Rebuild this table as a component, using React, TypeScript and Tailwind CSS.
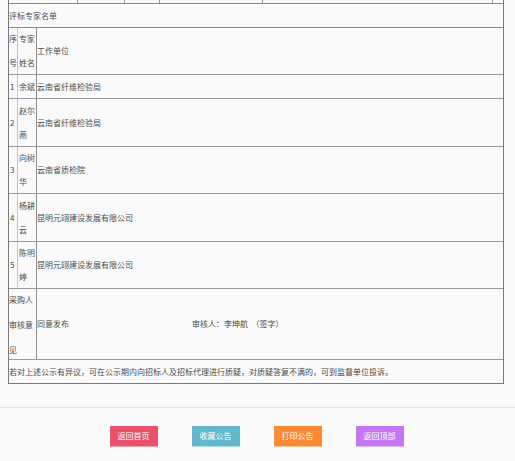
import React from "react";

const font = { fontFamily: '"Noto Sans CJK SC", "Noto Sans", sans-serif' };

function Row({ h, seq, name, unit }: { h: string; seq: string; name: React.ReactNode; unit: string }) {
  return (
    <div className={`flex border-b border-[#9a9a9a] ${h}`}>
      <div className="w-[9px] shrink-0 border-r border-[#c4c4c4] flex items-center pl-[1px]">{seq}</div>
      <div className="w-[19px] shrink-0 border-r border-[#8c8c8c] flex items-center pl-[1px] leading-[24px]">{name}</div>
      <div className="flex-1 flex items-center">{unit}</div>
    </div>
  );
}

export default function App() {
  return (
    <div className="w-[515px] h-[461px] bg-[#fafafa] text-[#4a4a4a] text-[8px] overflow-hidden flex flex-col" style={font}>
      <div className="ml-[8px] w-[496px] border-l border-r border-b border-[#7a7a7a]">
        <div className="flex h-[4px] border-b border-[#8a8a8a]">
          <div className="w-[69px] border-r border-[#9a9a9a]" />
          <div className="w-[47px] border-r border-[#9a9a9a]" />
          <div className="w-[35px] border-r border-[#9a9a9a]" />
          <div className="w-[103px] border-r border-[#9a9a9a]" />
          <div className="w-[230px] border-r border-[#9a9a9a]" />
          <div className="flex-1" />
        </div>
        <div className="h-[24px] border-b border-[#8a8a8a] flex items-center">评标专家名单</div>
        <div className="flex border-b border-[#9a9a9a] h-[47px]">
          <div className="w-[9px] shrink-0 border-r border-[#c4c4c4] flex items-center leading-[24px] overflow-visible whitespace-nowrap">
            <div className="w-[8px] break-all whitespace-normal">序号</div>
          </div>
          <div className="w-[19px] shrink-0 border-r border-[#8c8c8c] flex items-center pl-[1px] leading-[24px]">专家姓名</div>
          <div className="flex-1 flex items-center">工作单位</div>
        </div>
        <Row h="h-[24px]" seq="1" name="余斌" unit="云南省纤维检验局" />
        <Row h="h-[48px]" seq="2" name="赵尔燕" unit="云南省纤维检验局" />
        <Row h="h-[47px]" seq="3" name="向树华" unit="云南省质检院" />
        <Row h="h-[48px]" seq="4" name="杨耕云" unit="昆明元翊建设发展有限公司" />
        <Row h="h-[47px]" seq="5" name="陈明婷" unit="昆明元翊建设发展有限公司" />
        <div className="flex border-b border-[#9a9a9a] h-[71px]">
          <div className="w-[28px] shrink-0 border-r border-[#8c8c8c] flex items-center leading-[25px]">采购人审核意见</div>
          <div className="flex-1 flex items-center whitespace-pre">
            <span>同意发布</span>
            <span className="ml-[123px]">审核人：李坤航  （签字）</span>
          </div>
        </div>
        <div className="h-[23px] flex items-center">若对上述公示有异议，可在公示期内向招标人及招标代理进行质疑，对质疑答复不满的，可到监督单位投诉。</div>
      </div>
      <div className="mt-[23px] border-t border-[#e2e2e2] flex justify-center gap-[34px] pt-[18px] pr-[2px]">
        <button className="w-[48px] h-[21px] bg-[#e9516a] border-b border-[#f4a3b0] text-white text-[8px]">返回首页</button>
        <button className="w-[48px] h-[21px] bg-[#63b7cd] border-b border-[#b2dfea] text-white text-[8px]">收藏公告</button>
        <button className="w-[48px] h-[21px] bg-[#fb8a36] border-b border-[#fcc49a] text-white text-[8px]">打印公告</button>
        <button className="w-[48px] h-[21px] bg-[#c577f3] border-b border-[#e3bdf9] text-white text-[8px]">返回顶部</button>
      </div>
    </div>
  );
}
